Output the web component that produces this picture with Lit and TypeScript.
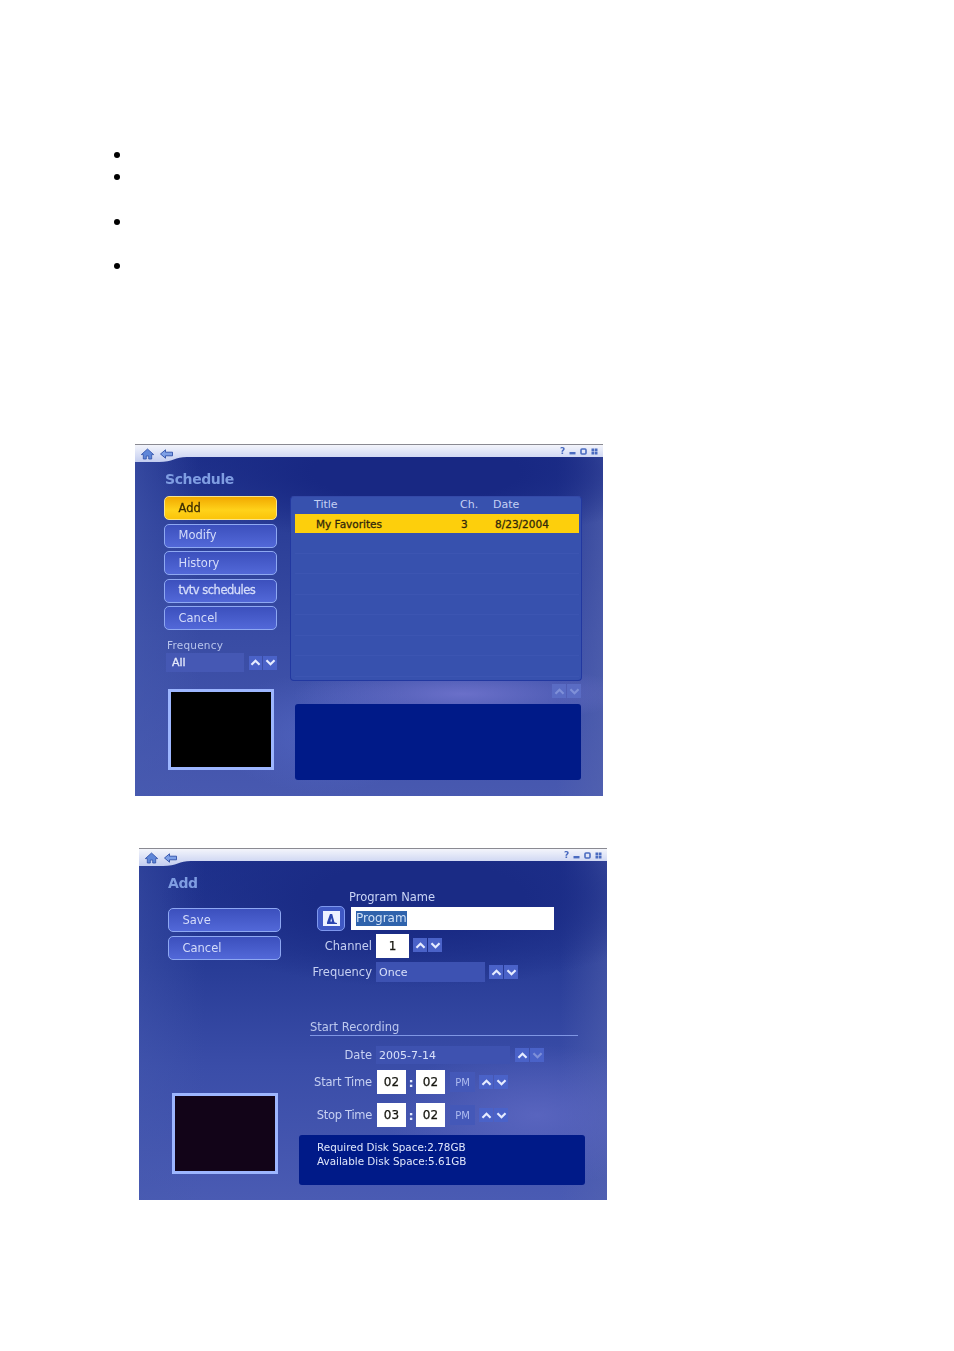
import { LitElement, html, css } from "lit";
import { customElement } from "lit/decorators.js";

const chevUp = () => html`<svg class="chev" viewBox="0 0 12 10"><path d="M1.5 7.5 6 3l4.5 4.5" fill="none" stroke="currentColor" stroke-width="2.4"/></svg>`;
const chevDown = () => html`<svg class="chev" viewBox="0 0 12 10"><path d="M1.5 2.5 6 7l4.5-4.5" fill="none" stroke="currentColor" stroke-width="2.4"/></svg>`;
const spin = (cls = "") => html`<div class="spin ${cls}"><span>${chevUp()}</span><span>${chevDown()}</span></div>`;

const titleBar = html`
  <div class="bar">
    <svg class="bar-bg" viewBox="0 0 468 20" preserveAspectRatio="none">
      <defs><linearGradient id="bg" x1="0" y1="0" x2="0" y2="1"><stop offset="0" stop-color="#f6f7fc"/><stop offset="1" stop-color="#c3cdf0"/></linearGradient></defs>
      <path d="M0 0H468V13H52C40 13 38 18 24 18H0Z" fill="url(#bg)" stroke="none"/>
      <path d="M0 .5H468" stroke="#8a8a92" stroke-width="1"/>
    </svg>
    <div class="nav">
      <svg viewBox="0 0 14 12" class="ic"><path d="M7 1 .8 6.6h2V11h3V8h2.4v3h3V6.6h2Z" fill="#5f86d8" stroke="#2f4fa8" stroke-width=".8"/></svg>
      <svg viewBox="0 0 14 12" class="ic"><path d="M1 6 6 1.8v2.4h7v3.6H6v2.4Z" fill="#7ea0e6" stroke="#2f4fa8" stroke-width=".9"/></svg>
    </div>
    <div class="ctl">
      <span class="q">?</span>
      <svg viewBox="0 0 7 7"><rect x=".5" y="4" width="6" height="2.4" fill="#4a6bc0"/></svg>
      <svg viewBox="0 0 7 7"><rect x="1" y="1" width="5" height="5" rx="1" fill="none" stroke="#4a6bc0" stroke-width="1.6"/></svg>
      <svg viewBox="0 0 7 7"><path d="M.5.5h2.7v2.7H.5zM3.8.5h2.7v2.7H3.8zM.5 3.8h2.7v2.7H.5zM3.8 3.8h2.7v2.7H3.8z" fill="#4a6bc0"/></svg>
    </div>
  </div>`;

@customElement("app-root")
export class AppRoot extends LitElement {
  static styles = css`
    :host { display: block; width: 954px; height: 1351px; background: #fff; font-family: "DejaVu Sans", sans-serif; overflow: hidden; }
    * { box-sizing: border-box; }
    .bullets { padding: 152px 0 0 114px; }
    .dot { width: 6px; height: 6px; border-radius: 50%; background: #000; }
    .d2 { margin-top: 16px; }
    .d3 { margin-top: 39px; }
    .d4 { margin-top: 38px; }

    .win { width: 468px; height: 352px; position: relative; overflow: hidden; color: #c9d4f6; font-size: 11.5px; }
    .win > * { filter: blur(.45px); }
    .w1 { margin: 175px 0 0 135px;
      background:
        radial-gradient(ellipse 170px 30px at 70% 71%, rgba(125,125,215,.7), transparent),
        radial-gradient(ellipse 110px 60px at 40% 82%, rgba(90,110,205,.5), transparent),
        radial-gradient(ellipse 260px 70px at 60% 8%, #182883 40%, transparent),
        linear-gradient(90deg, rgba(70,90,175,.55), transparent 14%, transparent 90%, rgba(85,100,175,.6)),
        linear-gradient(180deg, #1c2e88 0%, #2a3d96 22%, #394ca4 55%, #4859b0 100%);
    }
    .w2 { margin: 52px 0 0 139px;
      background:
        radial-gradient(ellipse 150px 70px at 85% 76%, rgba(95,105,195,.8), transparent),
        radial-gradient(ellipse 260px 90px at 60% 14%, #1a2b85 40%, transparent),
        linear-gradient(90deg, rgba(70,90,175,.4), transparent 14%, transparent 90%, rgba(85,100,175,.5)),
        linear-gradient(180deg, #1d2f8a 0%, #263a94 30%, #3a4da8 62%, #4a5bb3 100%);
    }
    .bar { height: 13px; display: flex; justify-content: space-between; position: relative; }
    .bar-bg { position: absolute; left: 0; top: 0; width: 468px; height: 20px; }
    .nav, .ctl { position: relative; display: flex; align-items: center; }
    .nav { gap: 4px; padding: 2px 0 0 5px; height: 18px; }
    .ic { width: 15px; height: 12px; }
    .ctl { gap: 4px; padding: 1px 5px 0 0; height: 13px; }
    .ctl svg { width: 7px; height: 7px; }
    .q { width: 5px; font: bold 9px "DejaVu Sans", sans-serif; color: #4a6bc0; }

    .body { display: flex; height: 339px; }
    .title { font-weight: bold; font-size: 14px; line-height: 18px; color: #7f9de2; letter-spacing: -.4px; }
    .t1 { margin: 13px 0 0 1px; }
    .t2 { margin-top: 13px; }
    .left { width: 113px; margin-left: 29px; display: flex; flex-direction: column; }
    .btn { height: 24px; border-radius: 5px; border: 1.5px solid #8ea8f2; padding: 0 0 1px 13.5px; display: flex; align-items: center; font-size: 11.5px; color: #d4dcfa; background: linear-gradient(180deg, #3c50bd, #5268d8); margin-top: 3.5px; }
    .btn.b { letter-spacing: -.5px; -webkit-text-stroke: .3px #d4dcfa; }
    .btn.on { color: #3c2c00; background: linear-gradient(180deg, #f2a900, #ffd21a 60%, #fbc40a); border-color: #f8e48c; -webkit-text-stroke: .3px #3c2c00; }
    .list-btns { display: flex; flex-direction: column; }
    .list-btns .btn:first-child { margin-top: 0; }
    .lb1 { margin-top: 8px; }
    .lb2 { margin-top: 16px; }
    .lb2 .btn { margin-top: 4px; }
    .flabel { margin: 8px 0 0 3px; font-size: 10.5px; line-height: 14px; letter-spacing: .2px; color: #b8c4ec; }
    .fsel { display: flex; align-items: center; margin-left: 2px; gap: 5px; margin-top: 1px; }
    .sel { background: #4558b4; height: 19px; width: 79px; padding-left: 6px; display: flex; align-items: center; color: #e4e9fb; font-size: 11px; }
    .b-txt { -webkit-text-stroke: .3px currentColor; }
    .spin { display: flex; gap: 1px; width: 29px; height: 14px; color: #e6ecff; }
    .spin span { flex: 1; background: #4a62c8; display: flex; align-items: center; justify-content: center; }
    .spin.dim { color: #7f90d8; }
    .spin.dim span { background: #5a6cc4; }
    .spin.half span:last-child { color: #7f90d8; }
    .chev { width: 11px; height: 9px; }
    .preview { margin: 17px 0 0 4px; width: 106px; height: 81px; border: 3px solid #9db6ff; background: #000; }
    .w2 .preview { background: #120418; margin-top: 133px; }

    .right { width: 292px; margin-left: 13px; padding-top: 39px; }
    .list { height: 185px; background: #3751ae; border-radius: 4px; border: 1px solid #2238a0; border-top-color: #3449a8; padding: 0 2px 0 4px; }
    .head { display: grid; grid-template-columns: 146px 33px 1fr; padding-left: 19px; height: 17px; line-height: 15px; font-size: 11px; color: #c4d0f4; }
    .row { display: grid; grid-template-columns: 145px 34px 1fr; padding: 1px 0 0 21px; height: 19px; align-items: center; background: #fdcf0c; color: #33290a; font-size: 10.5px; -webkit-text-stroke: .3px #33290a; }
    .lines { height: 146px; background: repeating-linear-gradient(180deg, #3751ae 0 19.5px, #3c55b2 19.5px 20.5px); }
    .under { display: flex; justify-content: flex-end; padding: 3px 1px 0 0; }
    .desc { margin: 6px 1px 0 5px; height: 76px; border-radius: 3px; background: #001a88; }

    .form { width: 292px; margin-left: 18px; }
    .pname { padding: 28px 0 0 50px; font-size: 11.5px; line-height: 16px; }
    .prow { display: flex; align-items: center; margin: 1px 0 0 18px; gap: 6px; }
    .abtn { width: 28px; height: 25px; border-radius: 5px; background: #3f58c4; border: 1.5px solid #7e98ee; display: flex; align-items: center; justify-content: center; }
    .abtn svg { width: 17px; height: 15px; }
    .input { width: 203px; height: 23px; background: #fff; padding-left: 5px; display: flex; align-items: center; font-size: 12px; }
    .hl { background: #2f63ac; color: #cfe0f6; line-height: 15px; }
    .frow { display: flex; align-items: center; }
    .lab { width: 73px; text-align: right; font-size: 11.5px; color: #c6d0f2; flex: none; }
    .box { background: #fff; color: #16160f; height: 24px; display: flex; align-items: center; justify-content: center; font-size: 12px; -webkit-text-stroke: .25px #16160f; }
    .r-ch { margin-top: 3px; }
    .r-ch .box { width: 33px; margin-left: 4px; }
    .r-ch .spin { margin-left: 4px; margin-top: -2px; }
    .r-fr { margin-top: 4px; }
    .vsel { margin-left: 4px; height: 20px; background: #3d52b2; padding-left: 3px; display: flex; align-items: center; font-size: 11px; color: #d8e0fa; }
    .r-fr .vsel { width: 109px; }
    .r-fr .spin { margin-left: 4px; }
    .sec { margin: 38px 0 0 11px; width: 268px; border-bottom: 1.5px solid #7f96e4; font-size: 11.5px; line-height: 15px; height: 16px; color: #bcc8ee; }
    .r-dt { margin-top: 10px; }
    .r-dt .vsel { width: 134px; height: 18px; background: #3e52b0; }
    .r-dt .spin { margin-left: 5px; }
    .r-t1 { margin-top: 6px; }
    .r-t2 { margin-top: 9px; }
    .r-t1 .lab, .r-t2 .lab { letter-spacing: -.2px; }
    .r-t2 .lab { letter-spacing: -.3px; }
    .tbox { width: 29px; margin-left: 5px; }
    .colon + .tbox { margin-left: 0; }
    .colon { width: 10px; text-align: center; font-weight: bold; font-size: 13px; color: #e4eaff; }
    .pm { width: 25px; height: 20px; margin-left: 5px; background: #4458b8; font-size: 10px; display: flex; align-items: center; justify-content: center; color: #aebcf0; }
    .pm + .spin { margin-left: 4px; }
    .disk { margin-top: 8px; height: 50px; width: 286px; background: #001a88; border-radius: 3px; padding: 5px 0 0 18px; font-size: 10.4px; line-height: 14px; color: #dfe6fb; }
  `;

  render() {
    return html`
      <div class="bullets">
        <div class="dot"></div><div class="dot d2"></div><div class="dot d3"></div><div class="dot d4"></div>
      </div>

      <div class="win w1">
        ${titleBar}
        <div class="body">
          <div class="left">
            <div class="title t1">Schedule</div>
            <div class="list-btns lb1">
              <div class="btn on">Add</div>
              <div class="btn">Modify</div>
              <div class="btn">History</div>
              <div class="btn b">tvtv schedules</div>
              <div class="btn">Cancel</div>
            </div>
            <div class="flabel">Frequency</div>
            <div class="fsel"><div class="sel"><span class="b-txt">All</span></div>${spin()}</div>
            <div class="preview"></div>
          </div>
          <div class="right">
            <div class="list">
              <div class="head"><span>Title</span><span>Ch.</span><span>Date</span></div>
              <div class="row"><span>My Favorites</span><span>3</span><span>8/23/2004</span></div>
              <div class="lines"></div>
            </div>
            <div class="under">${spin("dim")}</div>
            <div class="desc"></div>
          </div>
        </div>
      </div>

      <div class="win w2">
        ${titleBar}
        <div class="body">
          <div class="left">
            <div class="title t2">Add</div>
            <div class="list-btns lb2">
              <div class="btn">Save</div>
              <div class="btn">Cancel</div>
            </div>
            <div class="preview"></div>
          </div>
          <div class="form">
            <div class="pname">Program Name</div>
            <div class="prow">
              <div class="abtn"><svg viewBox="0 0 17 15"><rect width="17" height="15" fill="#eef2ff"/><path d="M4 11.5 7 3h2.2l2 7.5c.3 1 1 1.4 2.8 1.4v1.1H4Z" fill="#2b45b0"/><path d="M7.4 10.5 8.2 7l.9 3.5Z" fill="#eef2ff"/></svg></div>
              <div class="input"><span class="hl">Program</span></div>
            </div>
            <div class="frow r-ch"><span class="lab">Channel</span><div class="box">1</div>${spin()}</div>
            <div class="frow r-fr"><span class="lab">Frequency</span><div class="vsel">Once</div>${spin()}</div>
            <div class="sec">Start Recording</div>
            <div class="frow r-dt"><span class="lab">Date</span><div class="vsel">2005-7-14</div>${spin("half")}</div>
            <div class="frow r-t1"><span class="lab">Start Time</span><div class="box tbox">02</div><span class="colon">:</span><div class="box tbox">02</div><div class="pm">PM</div>${spin()}</div>
            <div class="frow r-t2"><span class="lab">Stop Time</span><div class="box tbox">03</div><span class="colon">:</span><div class="box tbox">02</div><div class="pm">PM</div>${spin()}</div>
            <div class="disk">Required Disk Space:2.78GB<br/>Available Disk Space:5.61GB</div>
          </div>
        </div>
      </div>
    `;
  }
}
